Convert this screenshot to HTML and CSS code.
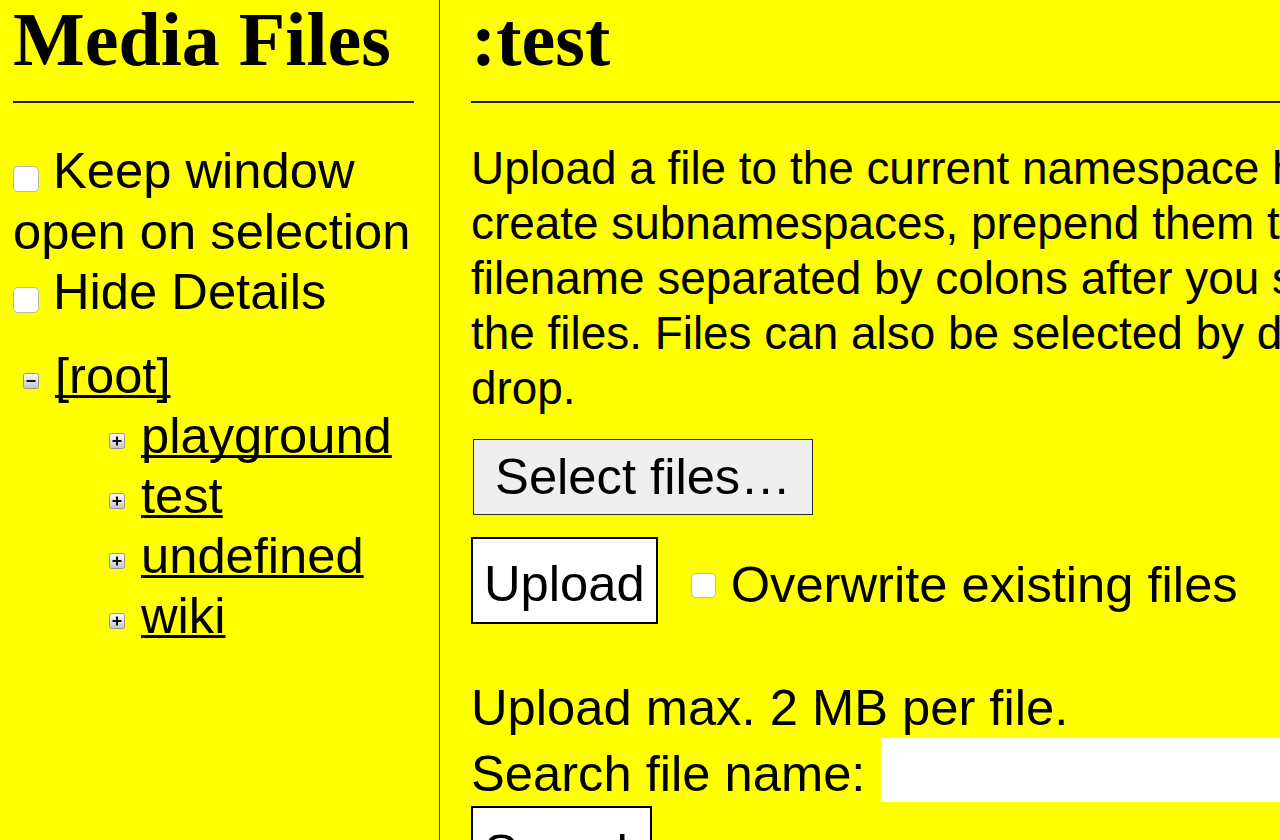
FILE: index.html
```html
<!DOCTYPE html>
<html lang="en">
<head>
<meta charset="utf-8">
<title>Media Files</title>
<link rel="stylesheet" href="styles.css">
</head>
<body>
<div class="page">
  <div class="manager">
    <aside class="left">
      <h1 class="title">Media Files</h1>
      <div class="options">
        <label class="opt"><input type="checkbox" class="cb">Keep window open on selection</label>
        <label class="opt"><input type="checkbox" class="cb">Hide Details</label>
      </div>
      <ul class="tree">
        <li><span class="toggle"><svg width="16" height="16" viewBox="0 0 16 16"><defs><linearGradient id="g0" x1="0" y1="0" x2="0" y2="1"><stop offset="0" stop-color="#ffffff"/><stop offset="1" stop-color="#c4c4c4"/></linearGradient></defs><rect x="0.5" y="0.5" width="15" height="15" rx="2" fill="url(#g0)" stroke="#969696"/><path d="M3.5 8h9" stroke="#111" stroke-width="2"/></svg></span><a href="#">[root]</a>
          <ul>
            <li><span class="toggle"><svg width="16" height="16" viewBox="0 0 16 16"><defs><linearGradient id="g1" x1="0" y1="0" x2="0" y2="1"><stop offset="0" stop-color="#ffffff"/><stop offset="1" stop-color="#c4c4c4"/></linearGradient></defs><rect x="0.5" y="0.5" width="15" height="15" rx="2" fill="url(#g1)" stroke="#969696"/><path d="M3.5 8h9M8 3.5v9" stroke="#111" stroke-width="2"/></svg></span><a href="#">playground</a></li>
            <li><span class="toggle"><svg width="16" height="16" viewBox="0 0 16 16"><defs><linearGradient id="g2" x1="0" y1="0" x2="0" y2="1"><stop offset="0" stop-color="#ffffff"/><stop offset="1" stop-color="#c4c4c4"/></linearGradient></defs><rect x="0.5" y="0.5" width="15" height="15" rx="2" fill="url(#g2)" stroke="#969696"/><path d="M3.5 8h9M8 3.5v9" stroke="#111" stroke-width="2"/></svg></span><a href="#">test</a></li>
            <li><span class="toggle"><svg width="16" height="16" viewBox="0 0 16 16"><defs><linearGradient id="g3" x1="0" y1="0" x2="0" y2="1"><stop offset="0" stop-color="#ffffff"/><stop offset="1" stop-color="#c4c4c4"/></linearGradient></defs><rect x="0.5" y="0.5" width="15" height="15" rx="2" fill="url(#g3)" stroke="#969696"/><path d="M3.5 8h9M8 3.5v9" stroke="#111" stroke-width="2"/></svg></span><a href="#">undefined</a></li>
            <li><span class="toggle"><svg width="16" height="16" viewBox="0 0 16 16"><defs><linearGradient id="g4" x1="0" y1="0" x2="0" y2="1"><stop offset="0" stop-color="#ffffff"/><stop offset="1" stop-color="#c4c4c4"/></linearGradient></defs><rect x="0.5" y="0.5" width="15" height="15" rx="2" fill="url(#g4)" stroke="#969696"/><path d="M3.5 8h9M8 3.5v9" stroke="#111" stroke-width="2"/></svg></span><a href="#">wiki</a></li>
          </ul>
        </li>
      </ul>
    </aside>
    <main class="right">
      <h1 class="title">:test</h1>
      <p class="intro">Upload a file to the current namespace here. To create subnamespaces, prepend them to your filename separated by colons after you selected the files. Files can also be selected by drag and drop.</p>
      <button type="button" class="select-btn">Select files…</button>
      <div class="upload-row">
        <button type="button" class="btn">Upload</button>
        <input type="checkbox" class="cb cb-over">
        <span class="over-label">Overwrite existing files</span>
      </div>
      <div class="max">Upload max. 2 MB per file.</div>
      <div class="search-row">
        <span class="search-label">Search file name:</span>
        <input type="text" class="search-input">
      </div>
      <button type="button" class="btn search-btn">Search</button>
    </main>
  </div>
</div>
</body>
</html>
```

FILE: styles.css
```css
html, body {
  margin: 0;
  padding: 0;
  background: #ffff00;
  overflow: hidden;
}

body {
  font-family: "Liberation Sans", Arial, sans-serif;
  font-size: 50.7px;
  color: #000;
}

.page {
  width: 1280px;
  height: 840px;
  overflow: hidden;
}

.manager {
  display: flex;
  height: 840px;
}

.left {
  flex: none;
  width: 440px;
  box-sizing: border-box;
  padding: 0 25px 0 13px;
  border-right: 1px solid #3c3c3c;
}

.right {
  flex: none;
  width: 1010px;
  padding-left: 31px;
}

.title {
  margin: 0;
  padding: 1px 0 24px;
  font-family: "Liberation Serif", "Times New Roman", serif;
  font-weight: bold;
  font-size: 76px;
  line-height: 76px;
  border-bottom: 2px solid #1c1c1c;
}

.options {
  margin: 38px -20px 0 0;
  line-height: 60.5px;
}

.opt {
  display: block;
}

.cb {
  -webkit-appearance: none;
  appearance: none;
  width: 26px;
  height: 26px;
  box-sizing: border-box;
  margin: 0 14px 0 0;
  border: 1px solid #b9b9b9;
  border-radius: 5px;
  background: #fff;
  vertical-align: -4px;
}

.tree {
  list-style: none;
  margin: 23px 0 0 10px;
  padding: 0;
  line-height: 60px;
}

.tree ul {
  list-style: none;
  margin: 0;
  padding: 0 0 0 86px;
}

.toggle {
  display: inline-block;
  width: 16px;
  height: 16px;
  vertical-align: 4px;
  margin-right: 16px;
}

.toggle svg {
  display: block;
}

.tree a {
  color: #000;
  text-decoration: underline;
  text-decoration-thickness: 3px;
  text-decoration-skip-ink: none;
}

.intro {
  margin: 38px 0 0;
  font-size: 45.9px;
  line-height: 55px;
}

.select-btn {
  display: block;
  margin: 23px 0 0 2px;
  width: 340px;
  height: 76px;
  box-sizing: border-box;
  border: 1px solid #2a2a2a;
  border-radius: 0;
  background: #efefef;
  color: #000;
  font-family: "Liberation Sans", Arial, sans-serif;
  font-size: 50.7px;
  line-height: 57px;
  padding: 8px 0 9px;
  text-align: center;
}

.upload-row {
  display: flex;
  align-items: flex-start;
  margin-top: 22px;
}

.btn {
  display: block;
  margin: 0;
  box-sizing: border-box;
  border: 2px solid #000;
  border-radius: 0;
  background: #fff;
  color: #000;
  font-family: "Liberation Sans", Arial, sans-serif;
  font-size: 50.7px;
  line-height: 57px;
  padding: 16px 11px 10px;
}

.cb-over {
  flex: none;
  width: 25px;
  height: 25px;
  margin: 36px 0 0 33px;
}

.over-label {
  margin: 18px 0 0 15px;
  line-height: 60.5px;
  white-space: nowrap;
}

.max {
  margin-top: 54px;
  line-height: 60.5px;
}

.search-row {
  display: flex;
  align-items: flex-start;
  margin-top: -1px;
}

.search-label {
  margin-top: 6px;
  line-height: 60.5px;
  white-space: nowrap;
}

.search-input {
  flex: none;
  margin: 0 0 0 16px;
  width: 600px;
  height: 64px;
  box-sizing: border-box;
  border: 0;
  padding: 0;
  background: #fff;
}

.search-btn {
  margin-top: 2px;
  padding: 16px 5px 10px 11px;
}
```
